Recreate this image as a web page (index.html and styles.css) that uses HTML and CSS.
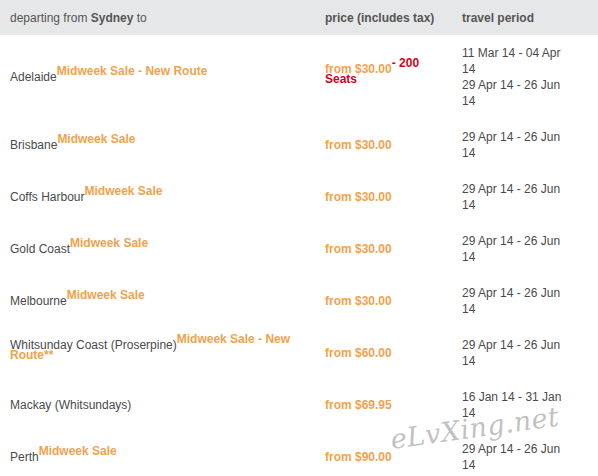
FILE: index.html
```html
<!DOCTYPE html>
<html>
<head>
<meta charset="utf-8">
<link rel="stylesheet" href="styles.css">
</head>
<body>
<div class="page">
<table class="fares">
  <colgroup>
    <col class="c-dest">
    <col class="c-price">
    <col class="c-period">
  </colgroup>
  <thead>
    <tr>
      <th class="h-dest">departing from <b>Sydney</b> to</th>
      <th class="h-bold">price (includes tax)</th>
      <th class="h-bold">travel period</th>
    </tr>
  </thead>
  <tbody>
    <tr>
      <td>Adelaide<sup class="tag">Midweek Sale - New Route</sup></td>
      <td><span class="price">from $30.00</span><sup class="seats">- 200 Seats</sup></td>
      <td class="period">11 Mar 14 - 04 Apr 14<br>29 Apr 14 - 26 Jun 14</td>
    </tr>
    <tr>
      <td>Brisbane<sup class="tag">Midweek Sale</sup></td>
      <td><span class="price">from $30.00</span></td>
      <td class="period">29 Apr 14 - 26 Jun 14</td>
    </tr>
    <tr>
      <td>Coffs Harbour<sup class="tag">Midweek Sale</sup></td>
      <td><span class="price">from $30.00</span></td>
      <td class="period">29 Apr 14 - 26 Jun 14</td>
    </tr>
    <tr>
      <td>Gold Coast<sup class="tag">Midweek Sale</sup></td>
      <td><span class="price">from $30.00</span></td>
      <td class="period">29 Apr 14 - 26 Jun 14</td>
    </tr>
    <tr>
      <td>Melbourne<sup class="tag">Midweek Sale</sup></td>
      <td><span class="price">from $30.00</span></td>
      <td class="period">29 Apr 14 - 26 Jun 14</td>
    </tr>
    <tr>
      <td>Whitsunday Coast (Proserpine)<sup class="tag">Midweek Sale - New Route**</sup></td>
      <td><span class="price">from $60.00</span></td>
      <td class="period">29 Apr 14 - 26 Jun 14</td>
    </tr>
    <tr>
      <td>Mackay (Whitsundays)</td>
      <td><span class="price">from $69.95</span></td>
      <td class="period">16 Jan 14 - 31 Jan 14</td>
    </tr>
    <tr>
      <td>Perth<sup class="tag">Midweek Sale</sup></td>
      <td><span class="price">from $90.00</span></td>
      <td class="period">29 Apr 14 - 26 Jun 14</td>
    </tr>
  </tbody>
</table>
<div class="watermark">eLvXing.net</div>
</div>
</body>
</html>
```
FILE: styles.css
```css
html, body {
  margin: 0;
  padding: 0;
  background: #ffffff;
}

.page {
  position: relative;
  width: 598px;
  height: 476px;
  overflow: hidden;
  font-family: "Liberation Sans", Arial, sans-serif;
  font-size: 12px;
  color: #4a4a4a;
}

.fares {
  width: 598px;
  border-collapse: collapse;
  table-layout: fixed;
}

.c-dest { width: 315px; }
.c-price { width: 137px; }
.c-period { width: 146px; }

.fares th {
  background: #e6e7e8;
  height: 35px;
  padding: 0 10px;
  text-align: left;
  vertical-align: middle;
  color: #555555;
  font-weight: normal;
  line-height: 16px;
}

.fares th b { font-weight: bold; }
.fares th.h-bold { font-weight: bold; }

.fares td {
  padding: 10px 10px;
  vertical-align: middle;
  line-height: 16px;
  text-align: left;
}

.fares td.period {
  padding-right: 28px;
}

.tag {
  font-size: 12px;
  font-weight: bold;
  color: #f2a24c;
  vertical-align: 6px;
  line-height: 0;
}

.price {
  font-weight: bold;
  color: #f2a24c;
}

.seats {
  font-size: 12px;
  font-weight: bold;
  color: #d0021b;
  vertical-align: 6px;
  line-height: 0;
}

.watermark {
  position: absolute;
  left: 393px;
  top: 424px;
  font-family: "DejaVu Serif", serif;
  font-style: italic;
  font-size: 27px;
  line-height: 32px;
  letter-spacing: 0.5px;
  color: rgba(140, 140, 140, 0.55);
  transform: rotate(-8deg);
  transform-origin: left bottom;
  white-space: nowrap;
}
```
